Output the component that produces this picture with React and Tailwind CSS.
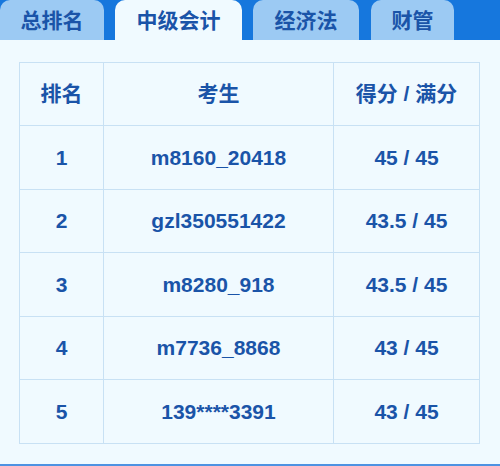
import React from "react"

const tabs = [
  { label: "总排名", w: "w-[104px]" },
  { label: "中级会计", w: "w-[127px]", active: true },
  { label: "经济法", w: "w-[106px]" },
  { label: "财管", w: "w-[83px] ml-[1px]" },
]

const rows = [
  { rank: 1, name: "m8160_20418", score: "45 / 45" },
  { rank: 2, name: "gzl350551422", score: "43.5 / 45" },
  { rank: 3, name: "m8280_918", score: "43.5 / 45" },
  { rank: 4, name: "m7736_8868", score: "43 / 45" },
  { rank: 5, name: "139****3391", score: "43 / 45" },
]

export default function App() {
  return (
    <div
      className="w-[500px] h-[466px] bg-[#f0faff] border-b-2 border-[#4d92e2] text-[#1a54a8] font-bold"
      style={{ fontFamily: '"Liberation Sans", "Noto Sans CJK SC", sans-serif' }}
    >
      {/* Tabs */}
      <div className="flex h-[40px] bg-[#1677dd] gap-[11px]">
        {tabs.map((t) => (
          <div
            key={t.label}
            className={`${t.w} h-full flex items-center justify-center pt-[2px] rounded-t-[10px] text-[21px] ${
              t.active ? "bg-[#f0faff] h-[41px]" : "bg-[#9ccaf3]"
            }`}
          >
            {t.label}
          </div>
        ))}
      </div>

      {/* Table */}
      <div className="pt-[22px] px-[19px]">
        <table className="w-[461px] border-collapse text-[21px] text-center">
          <thead>
            <tr className="h-[63px]">
              <th className="w-[84px] border border-[#c8e1f4] font-bold">排名</th>
              <th className="w-[230px] border border-[#c8e1f4] font-bold">考生</th>
              <th className="border border-[#c8e1f4] font-bold">得分 / 满分</th>
            </tr>
          </thead>
          <tbody>
            {rows.map((r) => (
              <tr key={r.rank} className="h-[63.5px]">
                <td className="border border-[#c8e1f4]">{r.rank}</td>
                <td className="border border-[#c8e1f4]">{r.name}</td>
                <td className="border border-[#c8e1f4]">{r.score}</td>
              </tr>
            ))}
          </tbody>
        </table>
      </div>
    </div>
  )
}
